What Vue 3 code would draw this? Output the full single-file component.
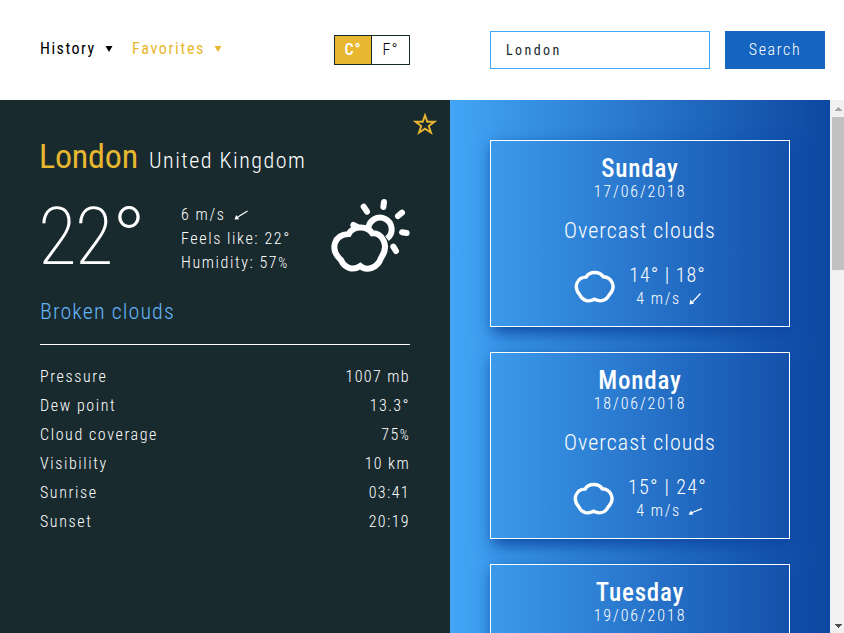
<script setup>
import { ref } from 'vue'

const query = ref('London')
const details = [
  ['Pressure', '1007 mb'],
  ['Dew point', '13.3°'],
  ['Cloud coverage', '75%'],
  ['Visibility', '10 km'],
  ['Sunrise', '03:41'],
  ['Sunset', '20:19'],
]
const days = [
  { name: 'Sunday', date: '17/06/2018', temp: '14° | 18°', dir: 'sw' },
  { name: 'Monday', date: '18/06/2018', temp: '15° | 24°', dir: 'wsw' },
  { name: 'Tuesday', date: '19/06/2018' },
]
</script>

<template>
  <div class="app">
    <header class="top">
      <nav class="menu">
        <a class="menu-item history">History<svg class="caret" viewBox="0 0 8 6"><path d="M0.5 0h7L4 6z" /></svg></a>
        <a class="menu-item favorites">Favorites<svg class="caret" viewBox="0 0 8 6"><path d="M0.5 0h7L4 6z" /></svg></a>
      </nav>
      <div class="units">
        <button class="unit active">C°</button>
        <button class="unit">F°</button>
      </div>
      <form class="search" @submit.prevent>
        <input v-model="query" class="field" type="text" />
        <button class="go">Search</button>
      </form>
    </header>

    <main class="body">
      <section class="current">
        <svg class="star" viewBox="0 0 24 24"><path d="M12 3.4 14.3 9.8H21.400L15.800 14 18 20.700 12 16.600 6 20.700 8.200 14 2.600 9.800H9.700z" /></svg>
        <h1 class="place"><span class="city">London</span><span class="country">United Kingdom</span></h1>
        <div class="now">
          <div class="degrees"><span class="value">22</span><span class="sign">°</span></div>
          <div class="extra">
            <div class="wind"><span>6 m/s</span>
              <svg class="arrow" viewBox="0 0 14 12"><path class="shaft" d="M13.500 2 3 8.500" /><path class="head" d="M0.500 10.500 2.200 6 5.200 10.200z" /></svg>
            </div>
            <div class="feels">Feels like: 22°</div>
            <div class="humidity">Humidity: 57<span class="percent">%</span></div>
          </div>
          <svg class="sky" viewBox="60 294 240 222">
            <path class="rays" d="M161 320 171 335M222 306 220 321M264 348 276 338M276 397 290 399M250 440 258 453M130 375 142 381" />
            <path d="M175 388A35 35 0 1 1 231 416" />
            <path d="M116 402C130 376 171 376 187 400C216 398 240 436 213 474C203 504 170 515 151 498C128 514 103 503 93 480C58 448 72 404 116 402Z" />
          </svg>
        </div>
        <p class="summary">Broken clouds</p>
        <dl class="details">
          <div v-for="[label, value] in details" :key="label" class="row">
            <dt>{{ label }}</dt>
            <dd v-if="value.endsWith('%')">{{ value.slice(0, -1) }}<span class="percent">%</span></dd>
            <dd v-else>{{ value }}</dd>
          </div>
        </dl>
      </section>

      <section class="forecast">
        <article v-for="day in days" :key="day.name" class="card">
          <h2 class="day">{{ day.name }}</h2>
          <div class="date">{{ day.date }}</div>
          <template v-if="day.temp">
            <p class="outlook">Overcast clouds</p>
            <div class="reading">
              <svg class="cloud" viewBox="284 420 122 98">
                <path d="M320 441C330 423 360 423 371 440C394 441 413 468 389 494C379 513 361 515 345 507C329 516 310 512 302 495C280 470 294 441 320 441Z" />
              </svg>
              <div class="numbers">
                <div class="temp">{{ day.temp }}</div>
                <div class="breeze"><span>4 m/s</span>
                  <svg class="arrow" viewBox="0 0 14 12">
                    <g v-if="day.dir === 'sw'"><path class="shaft" d="M12.500 0.500 4.500 9" /><path class="head" d="M1.500 11.500 2.200 6.500 6.200 10.600z" /></g>
                    <g v-else><path class="shaft" d="M14 3.500 3 8" /><path class="head" d="M0.500 9.500 3 5.500 5.200 9.800z" /></g>
                  </svg>
                </div>
              </div>
            </div>
          </template>
        </article>
      </section>

      <div class="scrollbar">
        <svg class="up" viewBox="0 0 7 4"><path d="M3 0h1v1h1v1h1v1h1v1H0V3h1V2h1V1h1z" /></svg>
        <div class="thumb"></div>
        <svg class="down" viewBox="0 0 7 4"><path d="M0 0h7v1H6v1H5v1H4v1H3V3H2V2H1V1H0z" /></svg>
      </div>
    </main>
  </div>
</template>

<style>
body { background: #fff; overflow: hidden; }
</style>

<style scoped>
* { box-sizing: border-box; }
.app {
  width: 844px;
  height: 633px;
  overflow: hidden;
  display: flex;
  flex-direction: column;
  font-family: Roboto, "Liberation Sans", sans-serif;
  font-stretch: 75%;
  font-weight: 300;
  font-size: 16px;
  line-height: 24px;
  letter-spacing: 1.6px;
  color: #fff;
}
button, input { font: inherit; letter-spacing: inherit; margin: 0; padding: 0; border: 0; border-radius: 0; }
h1, h2, p, dl, dd { margin: 0; font-weight: inherit; }

.top { flex: 0 0 100px; display: flex; align-items: center; padding: 0 19px 0 40px; color: #000; }
.menu { width: 294px; display: flex; font-weight: 400; padding-bottom: 2px; }
.menu-item { display: flex; align-items: center; }
.history { width: 92px; letter-spacing: 1.500px; }
.favorites { color: #e8b730; letter-spacing: 1.700px; }
.caret { width: 8px; height: 6px; margin-left: 9px; fill: currentColor; }
.units { width: 76px; height: 30px; display: flex; border: 1px solid #182a2e; }
.unit { flex: 0 0 37px; background: #fff; color: #000; letter-spacing: 1px; padding-bottom: 1px; }
.unit.active { background: #e8b730; color: #fff; border-right: 1px solid #182a2e; font-weight: 500; }
.search { display: flex; gap: 15px; margin-left: 80px; }
.field { width: 220px; height: 38px; border: 1px solid #42a5f5; padding: 0 0 1px 15px; font-size: 14px; font-weight: 400; letter-spacing: 2.400px; color: #182a2e; }
.go { width: 100px; height: 38px; background: #1565c0; color: #fff; }

.body { flex: 1; min-height: 0; display: flex; }
.current { position: relative; width: 450px; padding: 40px; background: #182a2e; }
.star { position: absolute; top: 12px; right: 13px; width: 24px; height: 24px; fill: none; stroke: #e8b730; stroke-width: 1.900; }
.place { display: flex; align-items: baseline; height: 50px; line-height: 32px; }
.city { width: 109px; font-size: 34px; font-weight: 400; letter-spacing: -0.200px; color: #e8b730; margin-left: -1px; margin-right: 1px; }
.country { font-size: 22px; letter-spacing: 1.500px; }
.now { display: flex; height: 100px; align-items: flex-start; }
.degrees { display: flex; width: 141px; font-size: 80px; font-weight: 200; line-height: 94px; letter-spacing: 0; }
.value { letter-spacing: -2px; margin-left: -2px; }
.sign { font-size: 92px; line-height: 104px; }
.extra { width: 149px; padding-top: 13px; white-space: nowrap; }
.wind, .breeze { display: flex; align-items: center; gap: 9px; }
.percent { font-size: 14px; }
.arrow { width: 14px; height: 12px; }
.shaft { fill: none; stroke: #fff; stroke-width: 1.200; }
.head { fill: #fff; }
.sky { width: 80px; height: 74px; margin-top: 8px; fill: none; stroke: #fff; stroke-width: 18; }
.rays { stroke-linecap: round; }
.summary { font-size: 22px; line-height: 44px; height: 55px; letter-spacing: 1.100px; color: #64b5f6; border-bottom: 1px solid #fff; }
.details { padding-top: 17px; }
.row { display: flex; justify-content: space-between; height: 29px; line-height: 29px; }
.row dd { letter-spacing: 1.400px; }

.forecast { width: 380px; padding: 40px; display: flex; flex-direction: column; gap: 25px; overflow: hidden; background: linear-gradient(90deg, #42a5f5, #0d47a1); }
.card { flex: 0 0 187px; border: 1px solid #fff; padding-top: 13px; text-align: center; box-shadow: 3px 6px 15px #0d47a1; background: linear-gradient(90deg, #3c9aeb, #1451ab); }
.day { font-size: 25px; line-height: 30px; font-weight: 500; letter-spacing: 0.800px; }
.date { line-height: 17px; margin-top: -1px; letter-spacing: 1.900px; }
.outlook { font-size: 22px; line-height: 30px; margin-top: 16px; letter-spacing: 1px; }
.reading { display: flex; justify-content: center; align-items: center; gap: 14px; margin-top: 17px; }
.cloud { width: 41px; height: 33px; margin-bottom: 2px; fill: none; stroke: #fff; stroke-width: 10; }
.temp { font-size: 20px; line-height: 24px; letter-spacing: 1px; }
.card:nth-child(2) .temp { letter-spacing: 1.300px; }
.breeze { justify-content: center; gap: 7px; padding-left: 3px; }

.scrollbar { width: 14px; background: #f1f1f1; display: flex; flex-direction: column; align-items: center; padding: 7px 0 5px 2px; }
.up, .down { width: 7px; height: 4px; flex: none; fill: #a3a3a3; }
.thumb { width: 12px; height: 153px; margin: 6px 0 auto; background: #c1c1c1; }
.down { fill: #505050; }
</style>
